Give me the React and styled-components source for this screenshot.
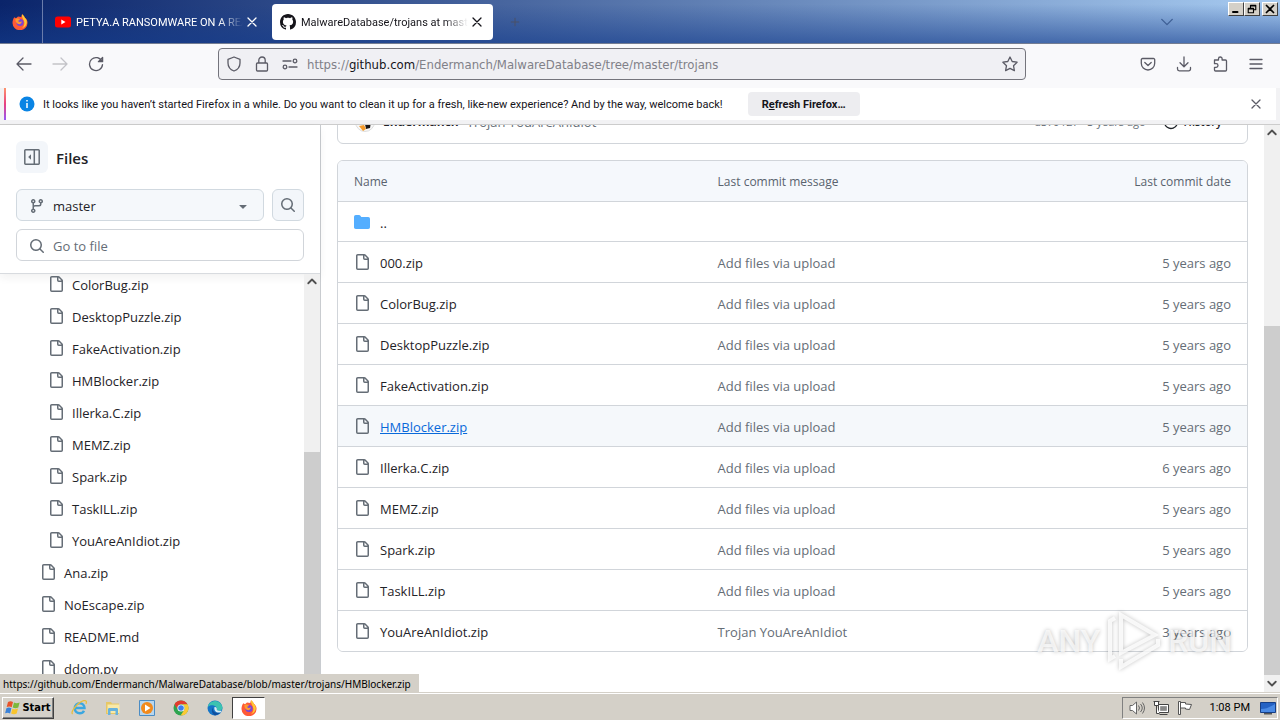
import React from "react"
import styled, { createGlobalStyle } from "styled-components"

const GlobalStyle = createGlobalStyle`
  * {
    box-sizing: border-box;
  }

  body {
    margin: 0;
    font-family: "Open Sans", "Noto Sans", sans-serif;
    font-size: 13px;
    color: #1f2328;
  }

  button, input {
    font: inherit;
    color: inherit;
  }

  button {
    display: flex;
    align-items: center;
    justify-content: center;
    flex-shrink: 0;
    padding: 0;
    border: 0;
    background: none;
  }

  svg {
    display: block;
    flex-shrink: 0;
  }
`

export const StyledDesktop = styled.div`
  position: relative;
  display: flex;
  flex-direction: column;
  height: 100vh;
  overflow: hidden;
  background: #fff;
`

/* browser chrome */

export const StyledTitleBar = styled.header`
  display: flex;
  align-items: center;
  height: 44px;
  flex-shrink: 0;
  border-bottom: 1px solid #747d92;
  background:
    linear-gradient(180deg, rgba(20, 60, 140, 0) 10%, rgba(20, 60, 140, .6) 100%),
    linear-gradient(90deg, #0a246a, #a6caf0);
  font-family: Roboto, sans-serif;
  font-size: 11px;
`

export const StyledPinned = styled.button`
  width: 43px;
  height: 43px;
  padding-right: 2px;
  border-right: 1px solid #6a7cab;
`

export const StyledTab = styled.div`
  display: flex;
  align-items: center;
  gap: 5px;
  width: ${p => (p.$active ? "221px" : "217px")};
  height: 36px;
  margin-left: ${p => (p.$active ? "12px" : "0")};
  padding: 0 ${p => (p.$active ? "8px" : "0")} 0 ${p => (p.$active ? "8px" : "12px")};
  border-radius: 4px;
  background: ${p => (p.$active ? "#fff" : "none")};
  color: ${p => (p.$active ? "#15141a" : "#fff")};

  button {
    margin-left: -4px;
  }
`

export const StyledTabTitle = styled.span`
  flex: 1;
  padding-top: 2px;
  overflow: hidden;
  white-space: nowrap;
  mask-image: linear-gradient(90deg, #000 calc(100% - 24px), transparent);
`

export const StyledNewTab = styled.button`
  width: 44px;
  height: 36px;
  color: #4a5068;
`

export const StyledAllTabs = styled.button`
  width: 32px;
  height: 32px;
  margin-left: auto;
  color: #3f6096;
`

export const StyledWindowButtons = styled.div`
  display: flex;
  align-self: flex-start;
  margin: 2px 2px 0 45px;
`

export const StyledWindowButton = styled.button`
  width: 16px;
  height: 14px;
  margin-left: ${p => (p.$apart ? "2px" : "0")};
  border: 1px solid;
  border-color: #fff #404040 #404040 #fff;
  background: #d4d0c8;
  color: #000;
`

export const StyledToolbar = styled.nav`
  display: flex;
  align-items: center;
  height: 44px;
  flex-shrink: 0;
  padding: 0 6px 4px;
  background: #f9f9fb;
  color: #5b5b66;
`

export const StyledToolButton = styled.button`
  width: 36px;
  height: 32px;
  color: ${p => (p.$faded ? "#c3c3c8" : "inherit")};
`

export const StyledUrlBar = styled.div`
  display: flex;
  align-items: center;
  gap: 12px;
  flex: 1;
  height: 32px;
  margin: 0 104px;
  padding: 0 7px;
  border: 1px solid #74747c;
  border-radius: 4px;
  background: #f0f0f4;
`

export const StyledUrl = styled.span`
  flex: 1;
  margin-left: -3px;
  font-family: "DejaVu Sans Condensed", "DejaVu Sans", sans-serif;
  font-size: 13px;
  color: #808088;
  white-space: nowrap;

  b {
    font-weight: 400;
    color: #15141a;
  }
`

export const StyledNoticeWrapper = styled.div`
  flex-shrink: 0;
  padding: 0 4px 4px;
  border-bottom: 1px solid #ccc;
  background: #f2f2f4;
`

export const StyledNotice = styled.div`
  display: flex;
  align-items: center;
  height: 32px;
  padding: 0 12px 0 13px;
  border-left: 2px solid;
  border-image: linear-gradient(#ff9a6c, #e8407f, #9059ff) 1;
  background: #fff;
  color: #15141a;
  font-family: Roboto, sans-serif;
  font-size: 11px;
  white-space: nowrap;
`

export const StyledNoticeText = styled.span`
  margin: 0 25px 0 8px;
`

export const StyledRefresh = styled.button`
  display: block;
  width: 112px;
  height: 24px;
  border-radius: 4px;
  background: #ededf0;
  font-weight: 700;
`

export const StyledNoticeClose = styled.button`
  width: 16px;
  height: 16px;
  margin-left: auto;
  color: #5b5b66;
`

/* page */

export const StyledPage = styled.div`
  display: flex;
  flex: 1;
  min-height: 0;
`

export const StyledSidebar = styled.aside`
  display: flex;
  flex-direction: column;
  width: 321px;
  flex-shrink: 0;
  border-right: 1px solid #c9ccd0;
`

export const StyledSidebarHead = styled.div`
  display: flex;
  flex-direction: column;
  gap: 8px;
  padding: 16px 16px 12px;
  border-bottom: 1px solid #d8dbdf;
  box-shadow: 0 4px 8px rgba(31, 35, 40, .06);
`

export const StyledSidebarRow = styled.div`
  display: flex;
  align-items: center;
  gap: 8px;
  margin-bottom: ${p => (p.$title ? "8px" : "0")};
`

export const StyledSidebarTitle = styled.h2`
  margin: 0;
  padding-top: 2px;
  font-size: 15px;
  font-weight: 600;
  line-height: 30px;
`

export const StyledIconButton = styled.button`
  width: 32px;
  height: 32px;
  border: ${p => (p.$outlined ? "1px solid #d1d9e0" : "0")};
  border-radius: 6px;
  background: #f3f6fa;
  color: #656d76;
`

export const StyledBranchButton = styled.button`
  flex: 1;
  justify-content: flex-start;
  gap: 8px;
  height: 32px;
  padding: 2px 12px 0;
  border: 1px solid #d1d9e0;
  border-radius: 6px;
  background: #f5f8fb;

  svg {
    color: #656d76;
  }

  svg:last-child {
    margin-left: auto;
  }
`

export const StyledFileSearch = styled.label`
  display: flex;
  align-items: center;
  gap: 8px;
  height: 32px;
  padding: 2px 12px 0;
  border: 1px solid #d1d5da;
  border-radius: 6px;
  color: #656d76;

  input {
    flex: 1;
    min-width: 0;
    padding: 0;
    border: 0;
    outline: 0;
    background: none;
  }

  input::placeholder {
    color: #656d76;
    opacity: 1;
  }
`

export const StyledScrollArea = styled.div`
  display: flex;
  flex: 1;
  min-width: 0;
  min-height: 0;
`

export const StyledTree = styled.ul`
  flex: 1;
  margin: -5px 0 0;
  padding: 0;
  list-style: none;
`

export const StyledTreeViewport = styled.div`
  flex: 1;
  overflow: hidden;
`

export const StyledTreeLink = styled.a`
  display: flex;
  align-items: center;
  gap: 8px;
  height: 32px;
  padding-left: ${p => (p.$nested ? "48px" : "40px")};
  color: #1f2328;
  text-decoration: none;

  svg {
    margin-bottom: 2px;
    color: #656d76;
  }
`

export const StyledScrollbar = styled.div`
  display: grid;
  grid-template-rows: 14px ${p => p.$before}fr ${p => p.$thumb}fr 17px;
  width: 16px;
  flex-shrink: 0;
  background: #f0f0f0;
  color: #505050;

  svg {
    align-self: center;
    justify-self: center;
  }

  svg:last-child {
    grid-row: 4;
  }
`

export const StyledThumb = styled.div`
  grid-row: 3;
  background: #cdcdcd;
`

export const StyledMain = styled.main`
  flex: 1;
  min-width: 0;
  padding: 0 16px;
  overflow: hidden;
`

export const StyledCommit = styled.div`
  display: flex;
  align-items: center;
  gap: 8px;
  height: 45px;
  margin: -26px 0 16px;
  padding: 0 25px 0 17px;
  border: 1px solid #d1d5da;
  border-radius: 6px;
  color: #656d76;

  strong {
    font-size: 12px;
    color: #1f2328;
  }
`

export const StyledCommitMeta = styled.span`
  display: flex;
  align-items: center;
  gap: 17px;
  margin-left: auto;
  font-size: 11px;
`

export const StyledHistory = styled.a`
  display: flex;
  align-items: center;
  gap: 5px;
  color: #1f2328;
  font-weight: 600;
  text-decoration: none;
`

export const StyledTable = styled.table`
  width: 100%;
  border: 1px solid #d1d5da;
  border-radius: 6px;
  border-spacing: 0;
  table-layout: fixed;
  overflow: hidden;
`

export const StyledHeadCell = styled.th`
  width: ${p => p.$width};
  height: 40px;
  padding: 0 16px;
  background: #f5f8fc;
  color: #59636e;
  font-size: 12px;
  font-weight: 400;
  text-align: ${p => (p.$right ? "right" : "left")};
`

export const StyledRow = styled.tr`
  background: ${p => (p.$hovered ? "#f5f8fb" : "#fff")};
`

export const StyledCell = styled.td`
  height: ${p => (p.$short ? "40px" : "41px")};
  padding: 2px 16px 0;
  border-top: 1px solid #d1d5da;
  color: #656d76;
  text-align: ${p => (p.$right ? "right" : "left")};
`

export const StyledFileLink = styled.a`
  display: flex;
  align-items: center;
  gap: 10px;
  color: ${p => (p.$hovered ? "#0969da" : "#1f2328")};
  text-decoration: none;

  span {
    text-decoration: ${p => (p.$hovered ? "underline" : "none")};
  }

  svg {
    margin-bottom: 2px;
    color: ${p => (p.$folder ? "#54aeff" : "#656d76")};
  }
`

/* overlays */

export const StyledStatus = styled.div`
  position: absolute;
  left: 0;
  bottom: 28px;
  height: 18px;
  padding: 0 8px 0 3px;
  background: #d4d0c8;
  color: #000;
  font-family: "Noto Sans", sans-serif;
  font-size: 10px;
  line-height: 20px;
`

export const StyledWatermark = styled.div`
  position: absolute;
  right: 48px;
  bottom: 48px;
  display: flex;
  align-items: center;
  gap: 6px;
  color: rgba(255, 255, 255, .7);
  font-family: Roboto, sans-serif;
  font-size: 32px;
  font-weight: 500;
  text-shadow: 0 0 4px rgba(0, 0, 0, .25);
  pointer-events: none;
`

/* taskbar */

export const StyledTaskbar = styled.footer`
  display: flex;
  align-items: center;
  height: 28px;
  flex-shrink: 0;
  padding: 2px 2px 0;
  border-top: 1px solid #d4d0c8;
  box-shadow: inset 0 1px #fff;
  background: #d4d0c8;
  color: #000;
`

export const StyledStart = styled.button`
  gap: 1px;
  width: 52px;
  height: 22px;
  margin-right: 8px;
  border: 1px solid;
  border-color: #fff #404040 #404040 #fff;
  box-shadow: inset -1px -1px #808080;
  font-family: "DejaVu Sans Condensed", sans-serif;
  font-size: 11px;
  font-weight: 700;
`

export const StyledTask = styled.button`
  width: ${p => (p.$pressed ? "33px" : "34px")};
  height: 22px;
  border: ${p => (p.$pressed ? "1px solid" : "0")};
  border-color: #404040 #fff #fff #404040;
  background: ${p => (p.$pressed ? "#fff" : "none")};
`

export const StyledTray = styled.div`
  display: flex;
  align-items: center;
  gap: 8px;
  height: 22px;
  margin-left: auto;
  padding: 0 1px 0 6px;
  border: 1px solid;
  border-color: #808080 #fff #fff #808080;
`

export const StyledClock = styled.time`
  margin: 0 2px 0 9px;
  font-family: Roboto, sans-serif;
  font-size: 11px;
`

const octicons = {
  file: "M2 1.75C2 .784 2.784 0 3.75 0h6.586c.464 0 .909.184 1.237.513l2.914 2.914c.329.328.513.773.513 1.237v9.586A1.75 1.75 0 0 1 13.25 16h-9.5A1.75 1.75 0 0 1 2 14.25Zm1.75-.25a.25.25 0 0 0-.25.25v12.5c0 .138.112.25.25.25h9.5a.25.25 0 0 0 .25-.25V6h-2.75A1.75 1.75 0 0 1 9 4.25V1.5Zm6.75.062V4.25c0 .138.112.25.25.25h2.688l-.011-.013-2.914-2.914-.013-.011Z",
  folder: "M1.75 1A1.75 1.75 0 0 0 0 2.75v10.5C0 14.216.784 15 1.75 15h12.5A1.75 1.75 0 0 0 16 13.25v-8.5A1.75 1.75 0 0 0 14.25 3H7.5a.25.25 0 0 1-.2-.1l-.9-1.2C6.07 1.26 5.55 1 5 1H1.75Z",
  branch: "M9.5 3.25a2.25 2.25 0 1 1 3 2.122V6A2.5 2.5 0 0 1 10 8.5H6a1 1 0 0 0-1 1v1.128a2.251 2.251 0 1 1-1.5 0V5.372a2.25 2.25 0 1 1 1.5 0v1.836A2.493 2.493 0 0 1 6 7h4a1 1 0 0 0 1-1v-.628A2.25 2.25 0 0 1 9.5 3.25Zm-6 0a.75.75 0 1 0 1.5 0 .75.75 0 0 0-1.5 0Zm8.25-.75a.75.75 0 1 0 0 1.5.75.75 0 0 0 0-1.5ZM4.25 12a.75.75 0 1 0 0 1.5.75.75 0 0 0 0-1.5Z",
  search: "M10.68 11.74a6 6 0 0 1-7.922-8.982 6 6 0 0 1 8.982 7.922l3.04 3.04a.749.749 0 0 1-.326 1.275.749.749 0 0 1-.734-.215ZM11.5 7a4.499 4.499 0 1 0-8.997 0A4.499 4.499 0 0 0 11.5 7Z",
  triangle: "m4.427 7.427 3.396 3.396a.25.25 0 0 0 .354 0l3.396-3.396A.25.25 0 0 0 11.396 7H4.604a.25.25 0 0 0-.177.427Z",
  github: "M8 0c4.42 0 8 3.58 8 8a8.013 8.013 0 0 1-5.45 7.59c-.4.08-.55-.17-.55-.38 0-.27.01-1.13.01-2.2 0-.75-.25-1.23-.54-1.48 1.78-.2 3.65-.88 3.65-3.95 0-.88-.31-1.59-.82-2.15.08-.2.36-1.02-.08-2.12 0 0-.67-.22-2.2.82-.64-.18-1.32-.27-2-.27-.68 0-1.36.09-2 .27-1.53-1.03-2.2-.82-2.2-.82-.44 1.1-.16 1.92-.08 2.12-.51.56-.82 1.28-.82 2.15 0 3.06 1.86 3.75 3.64 3.95-.23.2-.44.55-.51 1.07-.46.21-1.61.55-2.33-.66-.15-.24-.6-.83-1.23-.82-.67.01-.27.38.01.53.34.19.73.9.82 1.13.16.45.68 1.31 2.69.94 0 .67.01 1.3.01 1.49 0 .21-.15.45-.55.38A7.995 7.995 0 0 1 0 8c0-4.42 3.58-8 8-8Z",
}

const strokes = {
  back: "M15 8H1M7 2L1 8l6 6",
  forward: "M1 8h14M9 2l6 6-6 6",
  reload: "M14 5.500A6.500 6.500 0 1 0 14.500 8.600M14.600 1.500v4.200h-4.200z",
  shield: "M8 1l6 2.300v3.700c0 4-2.500 6.700-6 8-3.500-1.300-6-4-6-8V3.300z",
  lock: "M3.500 7h9a1 1 0 0 1 1 1v6a1 1 0 0 1-1 1h-9a1 1 0 0 1-1-1V8a1 1 0 0 1 1-1zM4.800 7V4.200a3.200 3.200 0 0 1 6.400 0V7",
  perms: "M1 5h8M7 11h8M13 3.200a1.800 1.800 0 1 1 0 3.600 1.800 1.800 0 0 1 0-3.600zM3 9.200a1.800 1.800 0 1 1 0 3.600 1.800 1.800 0 0 1 0-3.600z",
  star: "M8 1l2.200 4.500 4.900.7-3.600 3.500.9 4.900L8 12.300l-4.400 2.300.9-4.900L.9 6.200l4.900-.7z",
  pocket: "M2.500 2.500h11a1.200 1.200 0 0 1 1.200 1.200v3.600a6.700 6.700 0 0 1-13.400 0V3.700a1.200 1.200 0 0 1 1.200-1.200zM4.800 6.500L8 9.500l3.200-3",
  download: "M8 1v9.500M4 6.800l4 4 4-4M1.500 11.500v1.500a1.800 1.800 0 0 0 1.800 1.800h9.400a1.800 1.800 0 0 0 1.800-1.800v-1.500",
  puzzle: "M2.500 4h4V2.800a1.800 1.800 0 0 1 3.600 0V4h3.400a1 1 0 0 1 1 1v9a1 1 0 0 1-1 1h-10a1 1 0 0 1-1-1v-2.700h1.700a1.800 1.800 0 0 0 0-3.600H2.500z",
  menu: "M2 3.500h12M2 8h12M2 12.500h12",
  close: "M4 4l8 8M12 4l-8 8",
  down: "M2 5l6 6 6-6",
  up: "M3 11l5-5 5 5",
  scrollDown: "M3 5l5 5 5-5",
  plus: "M8 3v10M3 8h10",
  history: "M2.500 4.500A6.500 6.500 0 1 1 1.500 8M8 4v4.500h3",
  minimize: "M4 12h6",
  restore: "M6 6V3h7v6h-3M3 7h7v6H3zM6 4h7M3 8h7",
}

function Octicon({ name, size = 16 }) {
  return (
    <svg width={size} height={size} viewBox="0 0 16 16" fill="currentColor" aria-hidden="true">
      <path d={octicons[name]} />
    </svg>
  )
}

function Stroke({ name, size = 16, width = 1.3 }) {
  return (
    <svg width={size} height={size} viewBox="0 0 16 16" fill="none" stroke="currentColor" strokeWidth={width} strokeLinecap="round" strokeLinejoin="round" aria-hidden="true">
      <path d={strokes[name]} />
    </svg>
  )
}

function FirefoxLogo() {
  return (
    <svg width="16" height="16" viewBox="0 0 16 16" aria-hidden="true">
      <path d="M2.300 3.200L4 4.200 6 2.600 9.200 3 10 .3c1.500 1 2.400 2.200 2.800 3.500 1.800 1 2.800 3 2.700 5a7.500 7.300 0 0 1-15 .2c0-2.200.6-4.200 1.800-5.800z" fill="#ff5a36" />
      <path d="M10 .3c1.500 1 2.400 2.200 2.800 3.500 1.800 1.500 2.500 4 1.700 6.300-.8 2.200-2.500 3.600-4.500 4.100 2.500-2 3-5 1.800-7.700C11 4.800 9.500 3 10 .3z" fill="#ffc832" />
      <circle cx="8" cy="8.500" r="3.600" fill="#7a45d8" />
      <path d="M3.300 5c1.700-.8 3.700-.5 4.800.9C6.500 6 6 6.800 6.500 7.600c1 .9 2.500.3 3.200-.3.200 2.400-2 3.400-4 2.500C4.300 9.200 3.300 7 3.300 5z" fill="#ff9a2e" />
    </svg>
  )
}

function YoutubeLogo() {
  return (
    <svg width="16" height="16" viewBox="0 0 16 16" aria-hidden="true">
      <rect y="2.500" width="16" height="11" rx="2.500" fill="#f00" />
      <path d="M6.300 5.500v5l4.200-2.500z" fill="#fff" />
    </svg>
  )
}

function InfoIcon() {
  return (
    <svg width="16" height="16" viewBox="0 0 16 16" aria-hidden="true">
      <circle cx="8" cy="8" r="7.500" fill="#0a84e4" />
      <path d="M8 7v5M8 4v1.500" stroke="#fff" strokeWidth="1.500" />
    </svg>
  )
}

function SidebarIcon() {
  return (
    <svg width="16" height="16" viewBox="0 0 16 16" aria-hidden="true">
      <path d="M1.500.800h13a.7.7 0 0 1 .7.7v13a.7.7 0 0 1-.7.7h-13a.7.7 0 0 1-.7-.7v-13a.7.7 0 0 1 .7-.7zM10.300.800v14.400" fill="none" stroke="currentColor" strokeWidth="1.500" />
      <path d="M7 5.300v5.400L4.200 8z" fill="currentColor" />
    </svg>
  )
}

function Avatar() {
  return (
    <svg width="20" height="20" viewBox="0 0 20 20" aria-hidden="true">
      <circle cx="10" cy="10" r="9.500" fill="#f7f7f7" stroke="#ddd" />
      <path d="M9 4c4-2 7 2 7 6l-1 6-4 1-1-5z" fill="#1b1717" />
      <path d="M4 14l5-1 2 4-3 2z" fill="#f49b2c" />
    </svg>
  )
}

function WindowsLogo() {
  return (
    <svg width="16" height="16" viewBox="0 0 16 16" aria-hidden="true">
      <path d="M3 2c2-1 3.500-.8 5 .1L6.700 7.200c-1.700-1-3.200-1-5-.1z" fill="#e8532a" />
      <path d="M9 2.600c2 1 3.700.8 5.600-.1l-1.300 5c-2 1-3.700.9-5.600-.1z" fill="#7cb83a" />
      <path d="M1.400 8.200c2-1 3.500-.8 5 .1l-1.300 5.100c-1.700-1-3.200-1-5-.1z" fill="#3a82d8" />
      <path d="M7.400 8.700c2 1 3.700.8 5.600-.1l-1.300 5c-2 1-3.700.9-5.600-.1z" fill="#f8c42c" />
    </svg>
  )
}

function IeLogo() {
  return (
    <svg width="17" height="17" viewBox="0 0 16 16" fill="none" aria-hidden="true">
      <path d="M3.500 8.500h9.200c0-2.800-2-4.500-4.500-4.500s-4.600 2-4.600 4.700 2 4.700 4.600 4.700c1.800 0 3.300-.9 4-2.400" stroke="#3ba7e0" strokeWidth="2.300" />
      <path d="M1.500 14.200c-2.300-2 4.800-11 10.500-12.600 2.500-.6 3 1 2 3" stroke="#e8bd3c" strokeWidth="1.200" />
    </svg>
  )
}

function ExplorerLogo() {
  return (
    <svg width="16" height="16" viewBox="0 0 16 16" aria-hidden="true">
      <path d="M1 2h5l1 1.500h7V14H1z" fill="#e6c766" />
      <path d="M2.500 4.500h12V13h-12z" fill="#f8e9a8" />
      <path d="M3 9.500c0-1 .5-1.500 1.500-1.500h7c1 0 1.500.5 1.500 1.500V15h-2.500v-4h-5v4H3z" fill="#67b2dd" />
    </svg>
  )
}

function PlayerLogo() {
  return (
    <svg width="16" height="16" viewBox="0 0 16 16" aria-hidden="true">
      <path d="M.5.500h15v15H.5z" fill="#b8d6ee" stroke="#4b8cc4" />
      <circle cx="8" cy="8" r="6" fill="#f28a1c" />
      <path d="M6 4.500v7L11.500 8z" fill="#fff" />
    </svg>
  )
}

function ChromeLogo() {
  return (
    <svg width="16" height="16" viewBox="0 0 16 16" aria-hidden="true">
      <circle cx="8" cy="8" r="7.500" fill="#2da44f" />
      <path d="M1.500 4.200A7.500 7.500 0 0 1 14.500 4.300H8A3.700 3.700 0 0 0 4.800 9.900z" fill="#e33b2e" />
      <path d="M14.500 4.300A7.500 7.500 0 0 1 7.600 15.500L11.200 9.900A3.700 3.700 0 0 0 8 4.300z" fill="#fcc934" />
      <circle cx="8" cy="8" r="3.600" fill="#fff" />
      <circle cx="8" cy="8" r="2.800" fill="#3b7ded" />
    </svg>
  )
}

function EdgeLogo() {
  return (
    <svg width="16" height="16" viewBox="0 0 16 16" aria-hidden="true">
      <circle cx="8" cy="8" r="7.500" fill="#1575c8" />
      <path d="M.7 7A7.500 7.500 0 0 1 15.500 7.500c0 2-1.500 3.200-3.500 3.200-1.500 0-2.500-.7-2.200-1.700C10.500 6 4 3.500.7 7z" fill="#3cc3b0" />
      <path d="M6 7.500c-1 3.500 2 6 6.500 5.200l1-.6A7.500 7.500 0 0 1 8 15.500C5 14 4 10 6 7.500z" fill="#0f4f9e" />
      <path d="M7.500 7c1.500-.5 2.500.8 2.300 2-.3 1 .7 1.700 2.200 1.700h2.800l-1 1.500C10 13.500 6.500 11 7.500 7z" fill="#d8ecf4" />
    </svg>
  )
}

function SpeakerIcon() {
  return (
    <svg width="16" height="16" viewBox="0 0 16 16" fill="none" stroke="#666" aria-hidden="true">
      <path d="M1 5.500h2.500L7.500 2v12l-4-3.500H1z" fill="#fff" />
      <path d="M9.500 5.500q2 2.500 0 5M11.500 4q3.500 4 0 8M13.500 2.500q4 5.500 0 11" />
    </svg>
  )
}

function NetworkIcon() {
  return (
    <svg width="16" height="16" viewBox="0 0 16 16" fill="#fff" stroke="#444" aria-hidden="true">
      <path d="M5.500 4.500h10v8h-10z" fill="#fff" />
      <path d="M7.500 6.500h6v4h-6z" fill="#888" stroke="#999" />
      <path d="M6.500 14.500h8M1.500 1v4.500h4V1M3.500 5.500v8h3M.5 1.500h6" />
    </svg>
  )
}

function FlagIcon() {
  return (
    <svg width="16" height="16" viewBox="0 0 16 16" fill="#fff" stroke="#555" aria-hidden="true">
      <path d="M1.500 1.500h2v13h-2zM3.500 2.500h5v1.500l6 .5-2 5-4-.5V8h-5z" />
    </svg>
  )
}

function DesktopIcon() {
  return (
    <svg width="16" height="16" viewBox="0 0 16 16" aria-hidden="true">
      <path d="M.500 2.500h15v10H.500z" fill="#2462c4" stroke="#163f86" />
      <path d="M1 9c5 0 9-2 14-5v8H1z" fill="#4a8ae4" />
      <path d="M4 13h8v1.500H4z" fill="#555" />
    </svg>
  )
}

function PlayMark() {
  return (
    <svg width="56" height="62" viewBox="0 0 56 62" fill="none" stroke="#fff" strokeOpacity=".8" strokeWidth="4" filter="drop-shadow(0 0 2px rgba(0,0,0,.3))" aria-hidden="true">
      <path d="M15 5v38L49 25z" />
      <path d="M9 8L4 11v38l5-3M15 49v8l37-22v-6" />
    </svg>
  )
}

const nestedFiles = ["ColorBug.zip", "DesktopPuzzle.zip", "FakeActivation.zip", "HMBlocker.zip", "Illerka.C.zip", "MEMZ.zip", "Spark.zip", "TaskILL.zip", "YouAreAnIdiot.zip"]
const rootFiles = ["Ana.zip", "NoEscape.zip", "README.md", "ddom.py"]

const files = [
  { name: "000.zip", date: "5 years ago" },
  { name: "ColorBug.zip", date: "5 years ago" },
  { name: "DesktopPuzzle.zip", date: "5 years ago" },
  { name: "FakeActivation.zip", date: "5 years ago" },
  { name: "HMBlocker.zip", date: "5 years ago", hovered: true },
  { name: "Illerka.C.zip", date: "6 years ago" },
  { name: "MEMZ.zip", date: "5 years ago" },
  { name: "Spark.zip", date: "5 years ago" },
  { name: "TaskILL.zip", date: "5 years ago" },
  { name: "YouAreAnIdiot.zip", message: "Trojan YouAreAnIdiot", date: "3 years ago" },
]

function Scrollbar({ before, thumb }) {
  return (
    <StyledScrollbar $before={before} $thumb={thumb}>
      <Stroke name="up" size={12} width={2.4} />
      <StyledThumb />
      <Stroke name="scrollDown" size={12} width={2.4} />
    </StyledScrollbar>
  )
}

function BrowserChrome() {
  return (
    <>
      <StyledTitleBar>
        <StyledPinned aria-label="Firefox View"><FirefoxLogo /></StyledPinned>
        <StyledTab>
          <YoutubeLogo />
          <StyledTabTitle>PETYA.A RANSOMWARE ON A REAL PC</StyledTabTitle>
          <button aria-label="Close tab"><Stroke name="close" /></button>
        </StyledTab>
        <StyledTab $active>
          <Octicon name="github" />
          <StyledTabTitle>MalwareDatabase/trojans at master</StyledTabTitle>
          <button aria-label="Close tab"><Stroke name="close" /></button>
        </StyledTab>
        <StyledNewTab aria-label="New tab"><Stroke name="plus" size={12} /></StyledNewTab>
        <StyledAllTabs aria-label="List all tabs"><Stroke name="down" width={1.6} size={14} /></StyledAllTabs>
        <StyledWindowButtons>
          <StyledWindowButton aria-label="Minimize"><Stroke name="minimize" size={12} width={2.6} /></StyledWindowButton>
          <StyledWindowButton aria-label="Restore"><Stroke name="restore" size={12} width={1.5} /></StyledWindowButton>
          <StyledWindowButton $apart aria-label="Close"><Stroke name="close" size={14} width={2} /></StyledWindowButton>
        </StyledWindowButtons>
      </StyledTitleBar>
      <StyledToolbar>
        <StyledToolButton aria-label="Back"><Stroke name="back" /></StyledToolButton>
        <StyledToolButton $faded aria-label="Forward"><Stroke name="forward" /></StyledToolButton>
        <StyledToolButton aria-label="Reload"><Stroke name="reload" /></StyledToolButton>
        <StyledUrlBar>
          <Stroke name="shield" />
          <Stroke name="lock" />
          <Stroke name="perms" />
          <StyledUrl>https://<b>github.com</b>/Endermanch/MalwareDatabase/tree/master/trojans</StyledUrl>
          <button aria-label="Bookmark this page"><Stroke name="star" /></button>
        </StyledUrlBar>
        <StyledToolButton aria-label="Save to Pocket"><Stroke name="pocket" /></StyledToolButton>
        <StyledToolButton aria-label="Downloads"><Stroke name="download" /></StyledToolButton>
        <StyledToolButton aria-label="Extensions"><Stroke name="puzzle" /></StyledToolButton>
        <StyledToolButton aria-label="Menu"><Stroke name="menu" /></StyledToolButton>
      </StyledToolbar>
      <StyledNoticeWrapper>
        <StyledNotice>
          <InfoIcon />
          <StyledNoticeText>
            It looks like you haven’t started Firefox in a while. Do you want to clean it up for a fresh, like-new experience? And by the way, welcome back!
          </StyledNoticeText>
          <StyledRefresh>R<u>e</u>fresh Firefox…</StyledRefresh>
          <StyledNoticeClose aria-label="Dismiss"><Stroke name="close" /></StyledNoticeClose>
        </StyledNotice>
      </StyledNoticeWrapper>
    </>
  )
}

function TreeItem({ name, nested }) {
  return (
    <li>
      <StyledTreeLink href="#/" $nested={nested}>
        <Octicon name="file" />
        {name}
      </StyledTreeLink>
    </li>
  )
}

function Sidebar() {
  return (
    <StyledSidebar>
      <StyledSidebarHead>
        <StyledSidebarRow $title>
          <StyledIconButton aria-label="Collapse file tree"><SidebarIcon /></StyledIconButton>
          <StyledSidebarTitle>Files</StyledSidebarTitle>
        </StyledSidebarRow>
        <StyledSidebarRow>
          <StyledBranchButton>
            <Octicon name="branch" />
            master
            <Octicon name="triangle" />
          </StyledBranchButton>
          <StyledIconButton $outlined aria-label="Search this repository"><Octicon name="search" /></StyledIconButton>
        </StyledSidebarRow>
        <StyledFileSearch>
          <Octicon name="search" />
          <input type="text" placeholder="Go to file" aria-label="Go to file" />
        </StyledFileSearch>
      </StyledSidebarHead>
      <StyledScrollArea>
        <StyledTreeViewport>
          <StyledTree>
            {nestedFiles.map(name => <TreeItem key={name} name={name} nested />)}
            {rootFiles.map(name => <TreeItem key={name} name={name} />)}
          </StyledTree>
        </StyledTreeViewport>
        <Scrollbar before={164} thumb={223} />
      </StyledScrollArea>
    </StyledSidebar>
  )
}

function FileTable() {
  return (
    <StyledTable>
      <thead>
        <tr>
          <StyledHeadCell $width="40%">Name</StyledHeadCell>
          <StyledHeadCell $width="40%">Last commit message</StyledHeadCell>
          <StyledHeadCell $width="20%" $right>Last commit date</StyledHeadCell>
        </tr>
      </thead>
      <tbody>
        <StyledRow>
          <StyledCell $short colSpan={3}>
            <StyledFileLink href="#/" $folder>
              <Octicon name="folder" />
              <span>..</span>
            </StyledFileLink>
          </StyledCell>
        </StyledRow>
        {files.map(file => (
          <StyledRow key={file.name} $hovered={file.hovered}>
            <StyledCell>
              <StyledFileLink href="#/" $hovered={file.hovered}>
                <Octicon name="file" />
                <span>{file.name}</span>
              </StyledFileLink>
            </StyledCell>
            <StyledCell>{file.message || "Add files via upload"}</StyledCell>
            <StyledCell $right>{file.date}</StyledCell>
          </StyledRow>
        ))}
      </tbody>
    </StyledTable>
  )
}

function Taskbar() {
  return (
    <StyledTaskbar>
      <StyledStart><WindowsLogo />Start</StyledStart>
      <StyledTask aria-label="Internet Explorer"><IeLogo /></StyledTask>
      <StyledTask aria-label="File Explorer"><ExplorerLogo /></StyledTask>
      <StyledTask aria-label="Media Player"><PlayerLogo /></StyledTask>
      <StyledTask aria-label="Chrome"><ChromeLogo /></StyledTask>
      <StyledTask aria-label="Edge"><EdgeLogo /></StyledTask>
      <StyledTask $pressed aria-label="Firefox"><FirefoxLogo /></StyledTask>
      <StyledTray>
        <SpeakerIcon />
        <NetworkIcon />
        <FlagIcon />
        <StyledClock>1:08 PM</StyledClock>
        <DesktopIcon />
      </StyledTray>
    </StyledTaskbar>
  )
}

function App() {
  return (
    <StyledDesktop>
      <GlobalStyle />
      <BrowserChrome />
      <StyledPage>
        <Sidebar />
        <StyledMain>
          <StyledCommit>
            <Avatar />
            <strong>Endermanch</strong>
            <span>Trojan YouAreAnIdiot</span>
            <StyledCommitMeta>
              <span>d379127 · 3 years ago</span>
              <StyledHistory href="#/"><Stroke name="history" />History</StyledHistory>
            </StyledCommitMeta>
          </StyledCommit>
          <FileTable />
        </StyledMain>
        <Scrollbar before={187} thumb={349} />
      </StyledPage>
      <Taskbar />
      <StyledStatus>https://github.com/Endermanch/MalwareDatabase/blob/master/trojans/HMBlocker.zip</StyledStatus>
      <StyledWatermark>
        <span>ANY</span>
        <PlayMark />
        <span>RUN</span>
      </StyledWatermark>
    </StyledDesktop>
  )
}

export default App
